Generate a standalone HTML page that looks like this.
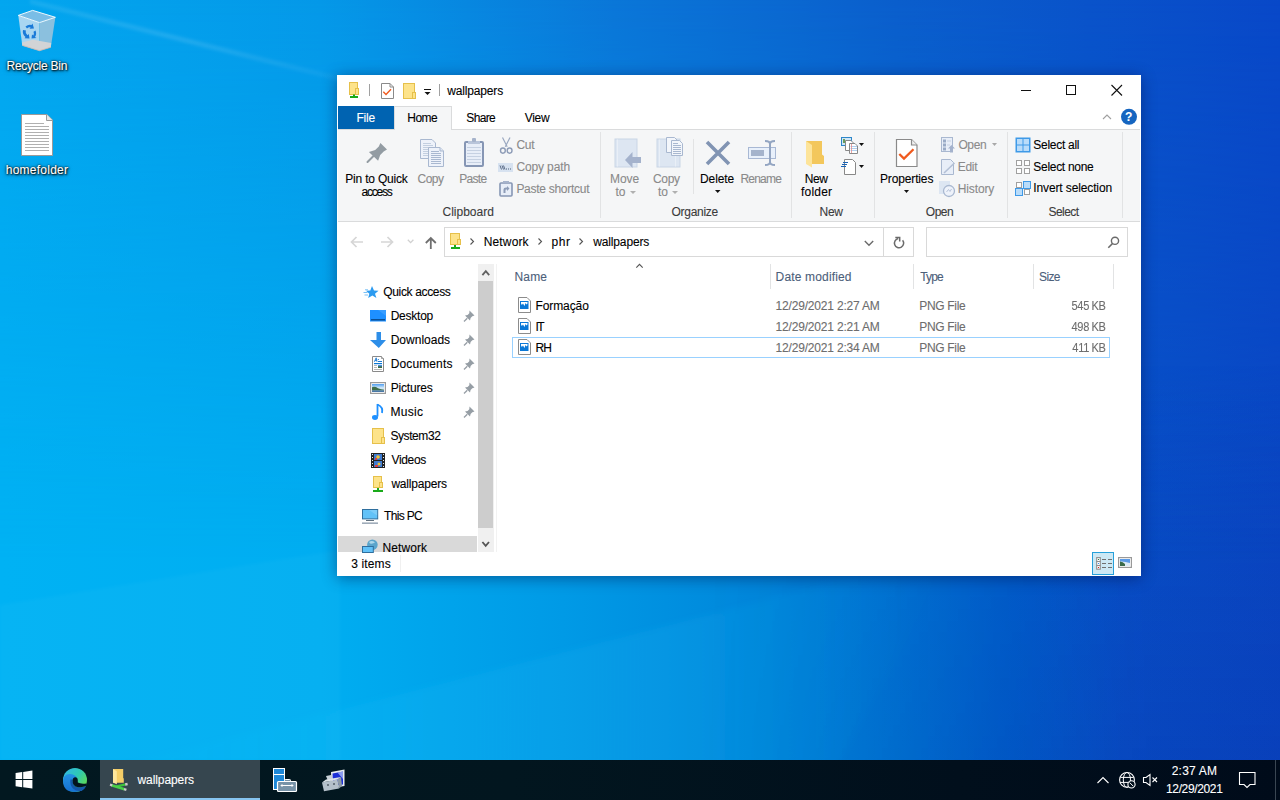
<!DOCTYPE html>
<html><head><meta charset="utf-8">
<style>
*{margin:0;padding:0;box-sizing:border-box}
html,body{width:1280px;height:800px;overflow:hidden}
body{position:relative;font-family:"Liberation Sans",sans-serif;font-size:12px;color:#000;background:#0a80dc}
.a{position:absolute}
.t{position:absolute;white-space:nowrap;line-height:14px;font-size:12px;-webkit-text-stroke:0.1px currentColor}
svg{position:absolute;overflow:visible}
.dlabel{color:#fff;text-shadow:0 0 2px rgba(0,0,0,1),1px 1px 2px rgba(0,0,0,0.9),0 1px 4px rgba(0,0,0,0.6)}
.dis{color:#8a8a8a}
.sep{position:absolute;width:1px;background:#e2e3e4}
.hdr{color:#4c607a}
.gl{color:#3b3b3b}
.gray{color:#6d6d6d}
</style></head><body>
<!-- wallpaper -->
<div class="a" style="left:0;top:0;width:1280px;height:800px;background:linear-gradient(90deg,#00b2f4 0%,#00aef1 25%,#009ae6 44%,#0086da 60%,#0072d2 70%,#0060cc 78%,#0850c8 88%,#0a48c4 100%)"></div>
<div class="a" style="left:0;top:0;width:1280px;height:800px;background:linear-gradient(90deg,#02a6ef 0%,#0498e8 25%,#0a76d8 48%,#0a5ecc 70%,#0848c8 100%);-webkit-mask-image:linear-gradient(180deg,rgba(0,0,0,1) 0%,rgba(0,0,0,0.6) 30%,rgba(0,0,0,0) 70%)"></div>
<div class="a" style="left:0;top:0;width:1280px;height:800px;background:linear-gradient(180deg,rgba(5,15,130,0) 45%,rgba(5,15,130,0.15) 100%);-webkit-mask-image:linear-gradient(90deg,rgba(0,0,0,0) 55%,rgba(0,0,0,1) 90%)"></div>
<svg style="left:0;top:0" width="1280" height="800">
 <defs>
  <linearGradient id="ray1" x1="0" y1="0" x2="1" y2="0"><stop offset="0" stop-color="#fff" stop-opacity="0.08"/><stop offset="0.5" stop-color="#fff" stop-opacity="0.11"/><stop offset="1" stop-color="#fff" stop-opacity="0.03"/></linearGradient>
  <linearGradient id="ray2" x1="0" y1="0" x2="1" y2="0"><stop offset="0" stop-color="#30d0ff" stop-opacity="0.0"/><stop offset="0.45" stop-color="#30d0ff" stop-opacity="0.10"/><stop offset="0.7" stop-color="#30d0ff" stop-opacity="0.10"/><stop offset="1" stop-color="#30d0ff" stop-opacity="0"/></linearGradient>
  <filter id="bl" x="-20%" y="-20%" width="140%" height="140%"><feGaussianBlur stdDeviation="1.6"/></filter>
  <filter id="bl2" x="-20%" y="-20%" width="140%" height="140%"><feGaussianBlur stdDeviation="3"/></filter>
 </defs>
 <path d="M30 -1 L350 79 L350 84 L30 4 Z" fill="url(#ray1)" filter="url(#bl)"/>
 <path d="M0 760 L0 605 L340 550 L340 760 Z" fill="#fff" fill-opacity="0.025" filter="url(#bl)"/>
 <path d="M0 800 L0 797 L880 571 L940 571 L820 800 Z" fill="url(#ray2)" filter="url(#bl2)"/>
</svg>

<!-- desktop icons -->
<svg style="left:0;top:0" width="80" height="200">
 <path d="M18.3 15.4 L39.5 22.6 L39.5 50.7 L22.3 45.4 Z" fill="#a9d6f1"/>
 <path d="M39.5 22.6 L55.4 17.3 L50.8 47.3 L39.5 50.7 Z" fill="#8bc0de"/>
 <path d="M18.3 15.4 L32.6 10.4 L55.4 17.3 L39.5 22.6 Z" fill="#79bde6"/>
 <path d="M18.3 15.4 L32.6 10.4 L55.4 17.3 L39.5 22.6 Z" fill="none" stroke="#eef8fd" stroke-width="1"/>
 <path d="M21.9 42.5 L33 39.8 L51.2 43 L50.8 47.3 L39.5 50.7 L22.3 45.4 Z" fill="#d2d4d6"/>
 <path d="M22.3 45.4 L39.5 50.7 L50.8 47.3" fill="none" stroke="#c9b8b0" stroke-width="0.8"/>
 <g fill="#1a7ad8">
  <path d="M25.5 26.5 Q28.5 24 31.5 25 L32.5 23.5 L34 28.5 L29.5 28.8 L30.6 27.4 Q28.5 27 27 28.5 Z"/>
  <path d="M35.5 30.5 Q37 34 35 37 L36.5 38 L31.5 38.5 L32 34.5 L33.3 35.6 Q34.4 33.8 33.5 31.8 Z"/>
  <path d="M23 30 Q22 34 25.5 37 L24.5 38.3 L29.5 38.5 L28.8 34 L27.6 35.2 Q25 33 26 30.5 Z"/>
 </g>
 <path d="M21.5 114.5 L47 114.5 L52.5 120 L52.5 155.5 L21.5 155.5 Z" fill="#fff" stroke="#9a9a9a" stroke-width="1"/>
 <path d="M46.5 114.5 L46.5 120.5 L52.5 120.5" fill="#e8e8e8" stroke="#9a9a9a" stroke-width="1"/>
 <g stroke="#b0b0b0" stroke-width="1">
  <path d="M25 123.5H44M25 126.5H49M25 129.5H49M25 132.5H49M25 135.5H49M25 138.5H49M25 141.5H49M25 144.5H49M25 147.5H49M25 150.5H49"/>
 </g>
</svg>
<div class="t dlabel" style="left:6.50px;top:59px;letter-spacing:-0.250px">Recycle Bin</div>
<div class="t dlabel" style="left:5.75px;top:163px;letter-spacing:0.250px">homefolder</div>

<!-- window -->
<div class="a" style="left:337px;top:75px;width:804px;height:501px;background:#fff;box-shadow:0 2px 14px rgba(0,10,60,0.45)"></div>

<!-- title bar -->
<svg style="left:0;top:0" width="1" height="1">
 <rect x="349.5" y="82.5" width="8" height="12" fill="#fde38a" stroke="#e6c04a"/>
 <rect x="355.5" y="88.5" width="3" height="6" fill="#fde38a" stroke="#e6c04a"/>
 <rect x="353" y="94.5" width="2" height="2" fill="#1aaa1a"/>
 <rect x="350" y="96" width="8" height="2" fill="#1aaa1a"/>
 <rect x="369" y="84" width="1" height="12" fill="#a0a0a0"/>
 <path d="M381.5 83.5 H390 L393.5 87 V98.5 H381.5 Z" fill="#fff" stroke="#8a8a8a"/>
 <path d="M390 83.5 V87 H393.5" fill="none" stroke="#8a8a8a"/>
 <path d="M383.3 91.8 L386 94.5 L391 89.2" fill="none" stroke="#f05a1e" stroke-width="1.4"/>
 <rect x="403.5" y="83.5" width="11" height="15" fill="#fde38a" stroke="#e6c04a"/>
 <rect x="412.5" y="92.5" width="3" height="6" fill="#fde38a" stroke="#e6c04a"/>
 <rect x="424" y="89" width="7" height="1" fill="#111"/>
 <path d="M424.5 92 H430.5 L427.5 95 Z" fill="#111"/>
 <rect x="439" y="84" width="1" height="12" fill="#a0a0a0"/>
 <rect x="1021" y="90" width="10" height="1" fill="#111"/>
 <rect x="1066.5" y="85.5" width="9" height="9" fill="none" stroke="#111"/>
 <path d="M1111.5 85 L1122 95.5 M1122 85 L1111.5 95.5" stroke="#111" stroke-width="1.1"/>
 <path d="M1103 119 L1107 115 L1111 119" fill="none" stroke="#a0a0a0" stroke-width="1.1"/>
 <circle cx="1129" cy="116.8" r="8" fill="#1565c0"/>
</svg>
<div class="t" style="left:447.30px;top:84px;letter-spacing:-0.167px">wallpapers</div>
<div class="t" style="left:1125px;top:110px;color:#fff;font-weight:bold;font-size:12px">?</div>

<!-- tabs -->
<div class="a" style="left:338px;top:106px;width:56px;height:23px;background:#0063b1"></div>
<div class="t" style="left:356.40px;top:111px;color:#fff;letter-spacing:-0.167px">File</div>
<div class="t" style="left:466.30px;top:111px;letter-spacing:-0.650px">Share</div>
<div class="t" style="left:524.70px;top:111px;letter-spacing:-0.300px">View</div>

<!-- ribbon -->
<div class="a" style="left:338px;top:129px;width:802px;height:93px;background:#f5f6f7;border-top:1px solid #dadbdc;border-bottom:1px solid #dadbdc"></div>
<div class="a" style="left:394px;top:106px;width:58px;height:24px;background:#f5f6f7;border:1px solid #dadbdc;border-bottom:0"></div>
<div class="t" style="left:407.20px;top:111px;letter-spacing:-0.467px">Home</div>
<div class="sep" style="left:600px;top:132px;height:86px"></div>
<div class="sep" style="left:693px;top:139px;height:55px"></div>
<div class="sep" style="left:791px;top:132px;height:86px"></div>
<div class="sep" style="left:874px;top:132px;height:86px"></div>
<div class="sep" style="left:1007px;top:132px;height:86px"></div>
<div class="sep" style="left:1122px;top:132px;height:86px"></div>
<!-- ribbon icons -->
<svg style="left:0;top:0" width="1" height="1">
 <!-- pin -->
 <path d="M380.4 143 L387 149.4 L383.7 151.6 L380.2 155.1 L378.1 160.8 L368.9 151.9 L375.2 150 L378.8 146.4 Z" fill="#939ca3"/>
 <path d="M373.5 156 L367.5 162" stroke="#939ca3" stroke-width="2" stroke-linecap="round"/>
 <!-- copy -->
 <path d="M420.5 139.5 H432 L435.5 143 V158.5 H420.5 Z" fill="#eef2fa" stroke="#a9b8d0"/>
 <g stroke="#c3cfe0"><path d="M423 143.5H431M423 145.5H433M423 147.5H433M423 149.5H433M423 151.5H433M423 153.5H433M423 155.5H433"/></g>
 <path d="M428.5 147.5 H440 L443.5 151 V166.5 H428.5 Z" fill="#eef2fa" stroke="#a9b8d0"/>
 <path d="M440 147.5 V151 H443.5" fill="#dfe6f2" stroke="#a9b8d0"/>
 <g stroke="#a9b8d0"><path d="M431 151.5H439M431 153.5H441M431 155.5H441M431 157.5H441M431 159.5H441M431 161.5H441M431 163.5H441"/></g>
 <!-- paste -->
 <rect x="465" y="142" width="18" height="24" rx="1" fill="#e8eef8" stroke="#8696b4" stroke-width="2"/>
 <rect x="468" y="141" width="12" height="3" fill="#b9c5da"/>
 <rect x="472" y="138" width="4" height="4" rx="1" fill="#a6b3cb"/>
 <g stroke="#c6d1e2"><path d="M467 147.5H481M467 150.5H481M467 153.5H481M467 156.5H481M467 159.5H481M467 162.5H481"/></g>
 <!-- cut -->
 <path d="M502.5 137.5 L507.2 146.8 M510 137.5 L505.3 146.8" stroke="#9aa8c0" stroke-width="1.2"/>
 <ellipse cx="502.9" cy="150.6" rx="2.4" ry="2.6" fill="none" stroke="#8d9cb7" stroke-width="1.4"/>
 <ellipse cx="509.6" cy="150.6" rx="2.4" ry="2.6" fill="none" stroke="#8d9cb7" stroke-width="1.4"/>
 <!-- copy path -->
 <rect x="498" y="163" width="15" height="9" fill="#d7e2f0"/>
 <path d="M500 165.5 L501.5 169.5 M502 165.5 L503.5 169.5 M503.5 165.5 L505 169.5" stroke="#4d5e7a" stroke-width="0.9"/>
 <rect x="506" y="168.5" width="1" height="1" fill="#4d5e7a"/><rect x="508" y="168.5" width="1" height="1" fill="#4d5e7a"/><rect x="510" y="168.5" width="1" height="1" fill="#4d5e7a"/>
 <!-- paste shortcut -->
 <rect x="500" y="183" width="12" height="13" rx="1" fill="#e8eef8" stroke="#8696b4" stroke-width="1.6"/>
 <rect x="503" y="181" width="6" height="2" fill="#a6b3cb"/>
 <path d="M503.5 193 L503.5 189.5 Q503.5 187.5 506 187.5 L507 187.5 L507 186 L509.5 188.5 L507 191 L507 189.5 L506 189.5 Q505.5 189.5 505.5 190.5 L505.5 193 Z" fill="#8d9cb7"/>
 <!-- move to -->
 <rect x="615" y="139" width="22" height="28" fill="#dde6f2" stroke="#c9d5e6"/>
 <path d="M617.5 139.5 V166.5" stroke="#e9eff7"/>
 <path d="M625 160 L632.5 152 L632.5 157 L641 157 L641 163 L632.5 163 L632.5 168 Z" fill="#a4b2cc"/>
 <!-- copy to -->
 <rect x="657" y="139" width="23" height="28" fill="#dde6f2" stroke="#c9d5e6"/>
 <path d="M659.5 139.5 V166.5 M675.5 150 V166.5" stroke="#e9eff7"/>
 <path d="M666.5 137.5 H674.5 L677.5 140.5 V152.5 H666.5 Z" fill="#f3f6fb" stroke="#a9b8d0"/>
 <path d="M671.5 140.5 H679.5 L682.5 143.5 V155.5 H671.5 Z" fill="#f3f6fb" stroke="#a9b8d0"/>
 <g stroke="#a9b8d0"><path d="M673 143.5H678M673 145.5H681M673 147.5H681M673 149.5H681M673 151.5H681M673 153.5H681"/></g>
 <!-- delete -->
 <path d="M707 142 L729 164 M729 142 L707 164" stroke="#8194b3" stroke-width="3.6"/>
 <!-- rename -->
 <rect x="748.5" y="147.5" width="27" height="11" fill="#e8f0fb" stroke="#a8b8d4"/>
 <rect x="751" y="150" width="13" height="6" fill="#a4b3cc"/>
 <path d="M770 142 V164" stroke="#93a5c2" stroke-width="2"/>
 <path d="M765 141 Q770 141 770 144 Q770 141 775 141 M765 165 Q770 165 770 162 Q770 165 775 165" fill="none" stroke="#93a5c2" stroke-width="2"/>
 <!-- new folder -->
 <path d="M806 141 L822 141 L822 154.5 L824 156 L824 164 L812 164 Z" fill="#f3c75c"/>
 <path d="M806 141 L812 145 L812 167.5 L806 164 Z" fill="#fde49a"/>
 <!-- new item -->
 <rect x="841.5" y="137.5" width="10" height="8" fill="#cfe6f7" stroke="#2d86c8"/>
 <rect x="843" y="139" width="2" height="4" fill="#6b9d5a"/>
 <path d="M845.5 140.5 H851 L853.5 143 V150.5 H845.5 Z" fill="#fff" stroke="#888"/>
 <path d="M849.5 143.5 H855 L857.5 146 V153.5 H849.5 Z" fill="#fff" stroke="#888"/>
 <path d="M850.5 146.5H857M850.5 148.5H857M850.5 150.5H857" stroke="#9cc3ea" stroke-width="0.8"/>
 <path d="M851.5 144 V153" stroke="#e58a8a" stroke-width="0.8"/>
 <path d="M859 143 H864 L861.5 146 Z" fill="#111"/>
 <!-- easy access -->
 <path d="M844.5 159.5 H852.5 L855.5 162.5 V174.5 H844.5 Z" fill="#fff" stroke="#888"/>
 <path d="M843 162.5 H848 M842 164.5 H847 M841 166.5 H846" stroke="#1a64b6" stroke-width="1"/>
 <path d="M859 165 H864 L861.5 168 Z" fill="#111"/>
 <!-- properties -->
 <path d="M896.5 139.5 H911.5 L917 145 V166.5 H896.5 Z" fill="#fff" stroke="#8a8a8a" stroke-width="1.2"/>
 <path d="M911.5 139.5 V145 H917" fill="#eee" stroke="#8a8a8a" stroke-width="1.2"/>
 <path d="M899.3 154 L904 158.6 L913.5 149.3" fill="none" stroke="#f05a1e" stroke-width="2.3"/>
 <path d="M904 190 H909 L906.5 193 Z" fill="#111"/>
 <!-- open -->
 <rect x="941.5" y="137.5" width="11" height="14" fill="#e8eef8" stroke="#a9b8d0"/>
 <rect x="943" y="139.5" width="3" height="3" fill="#9aabc6"/><rect x="943" y="143.5" width="3" height="3" fill="#9aabc6"/><rect x="943" y="147.5" width="3" height="3" fill="#9aabc6"/>
 <path d="M947 141H951M947 145H950" stroke="#c6d1e2"/>
 <path d="M951.5 145 L955 148.5 L953 148.5 L953 152.5 L950 152.5 L950 148.5 L948 148.5 Z" fill="#a4b2cc"/>
 <path d="M992 143 H997 L994.5 146 Z" fill="#a8a8a8"/>
 <!-- edit -->
 <path d="M941.5 159.5 H950.5 L953.5 162.5 V174.5 H941.5 Z" fill="#e8eef8" stroke="#a9b8d0"/>
 <path d="M944 173 L954.5 163" stroke="#b3c0d6" stroke-width="1.6"/>
 <!-- history -->
 <rect x="939" y="181" width="11" height="13" fill="#dde6f2"/>
 <circle cx="949" cy="191" r="5.5" fill="#eef2fa" stroke="#a9b8d0" stroke-width="1.3"/>
 <path d="M946.5 192 L948.5 189.5 L950 191.5 L951.5 189" fill="none" stroke="#a9b8d0" stroke-width="0.8"/>
 <!-- select all -->
 <rect x="1015.5" y="137.5" width="15" height="15" fill="#3f9ae8"/>
 <rect x="1017" y="139" width="5.5" height="5.5" fill="#b9dcfa"/><rect x="1023.5" y="139" width="5.5" height="5.5" fill="#b9dcfa"/>
 <rect x="1017" y="145.5" width="5.5" height="5.5" fill="#b9dcfa"/><rect x="1023.5" y="145.5" width="5.5" height="5.5" fill="#b9dcfa"/>
 <!-- select none -->
 <g fill="#fff" stroke="#a0a0a0"><rect x="1016.5" y="160.5" width="5" height="5"/><rect x="1024.5" y="160.5" width="5" height="5"/><rect x="1016.5" y="168.5" width="5" height="5"/><rect x="1024.5" y="168.5" width="5" height="5"/></g>
 <!-- invert -->
 <g fill="#fff" stroke="#a0a0a0"><rect x="1016.5" y="182.5" width="5" height="5"/><rect x="1024.5" y="189.5" width="5" height="5"/></g>
 <g fill="#b9dcfa" stroke="#3f9ae8"><rect x="1023.5" y="181.5" width="7" height="7"/><rect x="1015.5" y="188.5" width="7" height="7"/></g>
 <!-- move/copy to arrows -->
 <path d="M630 191 H636 L633 194 Z" fill="#b0b0b0"/>
 <path d="M672 191 H678 L675 194 Z" fill="#b0b0b0"/>
 <path d="M715 190 H720.5 L717.7 193 Z" fill="#111"/>
</svg>

<div class="t" style="left:345.25px;top:172px;letter-spacing:-0.195px">Pin to Quick</div>
<div class="t" style="left:361.50px;top:185px;letter-spacing:-1.200px">access</div>
<div class="t dis" style="left:417.50px;top:172px;letter-spacing:-0.500px">Copy</div>
<div class="t dis" style="left:459.25px;top:172px;letter-spacing:-0.688px">Paste</div>
<div class="t dis" style="left:516.40px;top:138px;letter-spacing:-0.200px">Cut</div>
<div class="t dis" style="left:516.40px;top:160px;letter-spacing:-0.125px">Copy path</div>
<div class="t dis" style="left:516.40px;top:182px;letter-spacing:-0.277px">Paste shortcut</div>
<div class="t gl" style="left:442.50px;top:205px;letter-spacing:0.000px">Clipboard</div>

<div class="t dis" style="left:610.00px;top:172px;letter-spacing:-0.083px">Move</div>
<div class="t dis" style="left:615.60px;top:185px;letter-spacing:-0.100px">to</div>
<div class="t dis" style="left:653.00px;top:172px;letter-spacing:-0.333px">Copy</div>
<div class="t dis" style="left:658.00px;top:185px;letter-spacing:0.000px">to</div>
<div class="t" style="left:700.00px;top:172px;letter-spacing:-0.080px">Delete</div>
<div class="t dis" style="left:740.40px;top:172px;letter-spacing:-0.760px">Rename</div>
<div class="t gl" style="left:671.50px;top:205px;letter-spacing:-0.286px">Organize</div>

<div class="t" style="left:804.80px;top:172px;letter-spacing:-0.500px">New</div>
<div class="t" style="left:801.00px;top:185px;letter-spacing:0.200px">folder</div>
<div class="t gl" style="left:819.60px;top:205px;letter-spacing:-0.300px">New</div>

<div class="t" style="left:880.00px;top:172px;letter-spacing:-0.144px">Properties</div>
<div class="t dis" style="left:958.40px;top:138px;letter-spacing:-0.367px">Open</div>
<div class="t dis" style="left:957.70px;top:160px;letter-spacing:-0.300px">Edit</div>
<div class="t dis" style="left:957.70px;top:182px;letter-spacing:-0.117px">History</div>
<div class="t gl" style="left:925.80px;top:205px;letter-spacing:-0.500px">Open</div>

<div class="t" style="left:1033.30px;top:138px;letter-spacing:-0.278px">Select all</div>
<div class="t" style="left:1033.30px;top:160px;letter-spacing:-0.290px">Select none</div>
<div class="t" style="left:1033.30px;top:181px;letter-spacing:-0.127px">Invert selection</div>
<div class="t gl" style="left:1048.50px;top:205px;letter-spacing:-0.540px">Select</div>
<!-- address row -->
<div class="a" style="left:444px;top:227px;width:470px;height:30px;border:1px solid #d9d9d9;background:#fff"></div>
<div class="a" style="left:883px;top:228px;width:1px;height:28px;background:#d9d9d9"></div>
<div class="a" style="left:926px;top:227px;width:202px;height:30px;border:1px solid #d9d9d9;background:#fff"></div>
<svg style="left:0;top:0" width="1" height="1">
 <path d="M351.5 242 H363 M356.5 237 L351.5 242 L356.5 247" fill="none" stroke="#d6d6d6" stroke-width="1.7"/>
 <path d="M381 242 H392.5 M387.5 237 L392.5 242 L387.5 247" fill="none" stroke="#d6d6d6" stroke-width="1.7"/>
 <path d="M407.8 239.8 L410.6 242.6 L413.4 239.8" fill="none" stroke="#d0d0d0" stroke-width="1.3"/>
 <path d="M430.8 249 V238 M425.8 243 L430.8 238 L435.8 243" fill="none" stroke="#6f6f6f" stroke-width="1.8"/>
 <rect x="450.5" y="233.5" width="9" height="11" fill="#fde38a" stroke="#e6c04a"/>
 <rect x="457.5" y="239.5" width="3" height="5" fill="#fde38a" stroke="#e6c04a"/>
 <rect x="454" y="245" width="2" height="2" fill="#1aaa1a"/>
 <rect x="451" y="247" width="9" height="2" fill="#1aaa1a"/>
 <path d="M470.5 238.5 L473.5 241.5 L470.5 244.5" fill="none" stroke="#555" stroke-width="1.1"/>
 <path d="M538.5 238.5 L541.5 241.5 L538.5 244.5" fill="none" stroke="#555" stroke-width="1.1"/>
 <path d="M579.5 238.5 L582.5 241.5 L579.5 244.5" fill="none" stroke="#555" stroke-width="1.1"/>
 <path d="M864.8 241 L869 245.2 L873.2 241" fill="none" stroke="#6a6a6a" stroke-width="1.4"/>
 <path d="M902.6 240.2 A4.6 4.6 0 1 1 898.2 238.6" fill="none" stroke="#6a6a6a" stroke-width="1.5"/>
 <path d="M895.3 237.5 H899.7 V241.6" fill="none" stroke="#6a6a6a" stroke-width="1.5"/>
 <circle cx="1115" cy="240.8" r="3.6" fill="none" stroke="#6a6a6a" stroke-width="1.4"/>
 <path d="M1112.4 243.6 L1108.3 247.7" stroke="#6a6a6a" stroke-width="1.5"/>
</svg>
<div class="t" style="left:483.75px;top:235px;letter-spacing:0.142px">Network</div>
<div class="t" style="left:551.50px;top:235px;letter-spacing:0.600px">phr</div>
<div class="t" style="left:593.30px;top:235px;letter-spacing:-0.156px">wallpapers</div>

<!-- nav pane -->
<div class="a" style="left:338px;top:536px;width:139px;height:16px;background:#d9d9d9"></div>
<svg style="left:0;top:0" width="1" height="1">
 <!-- star -->
 <path d="M372 286 L374 290.6 L378.5 290.8 L375 293.8 L376.4 298 L372.4 295.5 L368.2 298 L369.3 293.8 L366 290.8 L370.3 290.6 Z" fill="#2c9bf0"/>
 <path d="M363.5 292.5 H367.5 M364.5 295 H368 M365 289.8 H368" stroke="#6bbaf5" stroke-width="0.9"/>
 <!-- desktop -->
 <rect x="370" y="310" width="16" height="11.5" fill="#1e90ff"/>
 <path d="M378 310 L386 310 L386 316 Z" fill="#47a7ff" opacity="0.6"/>
 <rect x="371" y="319" width="14" height="1.5" fill="#0b4f93"/>
 <!-- downloads -->
 <path d="M376.5 332 H381 V340 H386 L378.8 348 L370 340 H376.5 Z" fill="#2d8ee8"/>
 <!-- documents -->
 <path d="M372.5 356.5 H381.5 L383.5 358.5 V371.5 H372.5 Z" fill="#fff" stroke="#8a8a8a"/>
 <path d="M381.5 356.5 V358.5 H383.5" fill="#e6e6e6" stroke="#8a8a8a" stroke-width="0.8"/>
 <path d="M374.3 361.8 L376.2 357.8 L377 361.8 M375 360.6 H376.8" fill="none" stroke="#1a78d0" stroke-width="0.9"/>
 <rect x="377.8" y="359" width="1" height="1" fill="#1a78d0"/>
 <rect x="378" y="361" width="4" height="1" fill="#1a78d0"/>
 <rect x="374" y="363" width="8" height="1.2" fill="#0a78d7"/>
 <path d="M374 365.5 H377 M374 367.5 H377 M374 369.5 H382" stroke="#b0b0b0" stroke-width="0.9"/>
 <rect x="378" y="365" width="4" height="3" fill="#4a8ee0"/>
 <rect x="378" y="366.3" width="4" height="1.7" fill="#3b6a42"/>
 <!-- pictures -->
 <rect x="370.6" y="382.6" width="14.8" height="10.8" fill="#fff" stroke="#9a9a9a" stroke-width="1.2"/>
 <defs><linearGradient id="sky" x1="0" y1="0" x2="0" y2="1"><stop offset="0" stop-color="#4f9df0"/><stop offset="0.5" stop-color="#d8ecf8"/><stop offset="1" stop-color="#9cc0d8"/></linearGradient></defs>
 <rect x="372" y="384" width="12" height="8" fill="url(#sky)"/>
 <path d="M372 387.2 Q375 386.2 378 388.2 Q381 389.6 384 389.8 V390.5 H372 Z" fill="#3f6e4a"/>
 <rect x="372" y="390.5" width="12" height="1.5" fill="#4a78a8"/>
 <!-- music -->
 <path d="M377.5 404 V416.5" stroke="#1e90ff" stroke-width="1.8"/>
 <path d="M377.5 404.5 Q383.5 407 382 413" fill="none" stroke="#1e90ff" stroke-width="1.8"/>
 <ellipse cx="375" cy="417.5" rx="3" ry="2.4" fill="#1e90ff"/>
 <!-- system32 folder -->
 <rect x="372.5" y="428.5" width="11" height="15" fill="#fde38a" stroke="#e6c04a"/>
 <rect x="381.5" y="437.5" width="3" height="6" fill="#fde38a" stroke="#e6c04a"/>
 <!-- videos -->
 <rect x="371" y="453" width="14" height="15" fill="#222"/>
 <g fill="#eee"><rect x="372" y="454" width="1" height="1"/><rect x="372" y="457" width="1" height="1"/><rect x="372" y="460" width="1" height="1"/><rect x="372" y="463" width="1" height="1"/><rect x="372" y="466" width="1" height="1"/><rect x="383" y="454" width="1" height="1"/><rect x="383" y="457" width="1" height="1"/><rect x="383" y="460" width="1" height="1"/><rect x="383" y="463" width="1" height="1"/><rect x="383" y="466" width="1" height="1"/></g>
 <rect x="374" y="454" width="8" height="6" fill="#3e7bd0"/>
 <rect x="374" y="461" width="8" height="6" fill="#3e7bd0"/>
 <circle cx="378" cy="457" r="1.8" fill="#f2c230"/><rect x="375" y="458" width="2" height="2" fill="#e04040"/>
 <circle cx="379" cy="464" r="1.5" fill="#f2c230"/><rect x="375" y="465" width="3" height="2" fill="#e04040"/>
 <!-- wallpapers net folder -->
 <rect x="373.5" y="476.5" width="8" height="11" fill="#fde38a" stroke="#e6c04a"/>
 <rect x="379.5" y="482.5" width="3" height="5" fill="#fde38a" stroke="#e6c04a"/>
 <rect x="377" y="488" width="2" height="2" fill="#1aaa1a"/>
 <rect x="373" y="490" width="10" height="2" fill="#1aaa1a"/>
 <!-- this pc -->
 <rect x="362.5" y="509.5" width="15.2" height="9.4" fill="#62c2f8" stroke="#2f6f9e" stroke-width="1"/>
 <path d="M369 510 L377.2 510 L377.2 515.5 Z" fill="#9fdcfb" opacity="0.45"/>
 <rect x="366" y="520" width="8" height="1" fill="#60707e"/>
 <rect x="362" y="522.5" width="16" height="1.3" fill="#8a9aaa"/>
 <!-- network -->
 <circle cx="372.4" cy="544.8" r="5.3" fill="#5aa5cc"/>
 <path d="M369 542 Q372 540 375 542.5 Q373 544 370 543.5 Z" fill="#bfe3f2" opacity="0.8"/>
 <rect x="362.5" y="546.5" width="10.8" height="6" fill="#62c2f8" stroke="#2f6f9e" stroke-width="1"/>
 <!-- pins -->
 <g fill="#969ea5">
  <path id="pn" d="M469.5 310.5 L474.5 315.5 L472.3 316.3 L470.6 318 L470 320.5 L465 315.5 L467.6 314.9 L469.3 313.2 Z"/>
 </g>
 <g stroke="#969ea5" stroke-width="1.3"><path d="M467.3 318.2 L464 321.5"/></g>
</svg>
<svg style="left:0;top:24px" width="1" height="1"><path d="M469.5 310.5 L474.5 315.5 L472.3 316.3 L470.6 318 L470 320.5 L465 315.5 L467.6 314.9 L469.3 313.2 Z" fill="#969ea5"/><path d="M467.3 318.2 L464 321.5" stroke="#969ea5" stroke-width="1.3"/></svg>
<svg style="left:0;top:48px" width="1" height="1"><path d="M469.5 310.5 L474.5 315.5 L472.3 316.3 L470.6 318 L470 320.5 L465 315.5 L467.6 314.9 L469.3 313.2 Z" fill="#969ea5"/><path d="M467.3 318.2 L464 321.5" stroke="#969ea5" stroke-width="1.3"/></svg>
<svg style="left:0;top:72px" width="1" height="1"><path d="M469.5 310.5 L474.5 315.5 L472.3 316.3 L470.6 318 L470 320.5 L465 315.5 L467.6 314.9 L469.3 313.2 Z" fill="#969ea5"/><path d="M467.3 318.2 L464 321.5" stroke="#969ea5" stroke-width="1.3"/></svg>
<svg style="left:0;top:96px" width="1" height="1"><path d="M469.5 310.5 L474.5 315.5 L472.3 316.3 L470.6 318 L470 320.5 L465 315.5 L467.6 314.9 L469.3 313.2 Z" fill="#969ea5"/><path d="M467.3 318.2 L464 321.5" stroke="#969ea5" stroke-width="1.3"/></svg>

<div class="t" style="left:383.30px;top:285px;letter-spacing:-0.345px">Quick access</div>
<div class="t" style="left:390.70px;top:309px;letter-spacing:-0.242px">Desktop</div>
<div class="t" style="left:390.70px;top:333px;letter-spacing:0.006px">Downloads</div>
<div class="t" style="left:390.70px;top:357px;letter-spacing:0.125px">Documents</div>
<div class="t" style="left:390.70px;top:381px;letter-spacing:-0.171px">Pictures</div>
<div class="t" style="left:390.40px;top:405px;letter-spacing:0.300px">Music</div>
<div class="t" style="left:390.40px;top:429px;letter-spacing:-0.414px">System32</div>
<div class="t" style="left:391.40px;top:453px;letter-spacing:-0.300px">Videos</div>
<div class="t" style="left:391.40px;top:477px;letter-spacing:-0.189px">wallpapers</div>
<div class="t" style="left:384.00px;top:509px;letter-spacing:-0.667px">This PC</div>
<div class="a" style="left:338px;top:536px;width:139px;height:16px;overflow:hidden"><div class="t" style="left:44.50px;top:5px;letter-spacing:0.083px">Network</div></div>
<!-- scrollbar -->
<div class="a" style="left:478px;top:264px;width:16px;height:288px;background:#f0f0f0"></div>
<div class="a" style="left:478px;top:281px;width:15px;height:247px;background:#cdcdcd"></div>
<div class="a" style="left:496px;top:264px;width:1px;height:288px;background:#f2f2f2"></div>
<svg style="left:0;top:0" width="1" height="1">
 <path d="M482.4 275.2 L485.8 271.2 L489.2 275.2" fill="none" stroke="#606060" stroke-width="1.8"/>
 <path d="M482.4 542 L485.7 545.8 L489 542" fill="none" stroke="#555" stroke-width="1.8"/>
</svg>

<!-- file list -->
<svg style="left:0;top:0" width="1" height="1">
 <path d="M636.3 267.7 L639.5 264.4 L642.7 267.7" fill="none" stroke="#555" stroke-width="1.1"/>
</svg>
<div class="t hdr" style="left:514.60px;top:270px;letter-spacing:0.100px">Name</div>
<div class="t hdr" style="left:775.60px;top:270px;letter-spacing:0.158px">Date modified</div>
<div class="t hdr" style="left:920.30px;top:270px;letter-spacing:-0.850px">Type</div>
<div class="t hdr" style="left:1039.10px;top:270px;letter-spacing:-0.667px">Size</div>
<div class="sep" style="left:770px;top:264px;height:25px"></div>
<div class="sep" style="left:913px;top:264px;height:25px"></div>
<div class="sep" style="left:1033px;top:264px;height:25px"></div>
<div class="sep" style="left:1113px;top:264px;height:25px"></div>

<div class="a" style="left:512px;top:337px;width:598px;height:21px;border:1px solid #99d1ff"></div>
<svg style="left:0;top:0" width="1" height="1">
 <g id="fi">
 <path d="M518.5 297.5 H527 L530.5 301 V312.5 H518.5 Z" fill="#fff" stroke="#8c8c8c"/>
 <rect x="520" y="301" width="8.5" height="8" fill="#0a78d7"/>
 <path d="M521 302 H527.5 V303.5 L526.5 304.5 L525.5 303 L524.5 306 L523 303.5 L521.8 305 L521 303.5 Z" fill="#fff"/>
 </g>
</svg>
<svg style="left:0;top:21px" width="1" height="1"><path d="M518.5 297.5 H527 L530.5 301 V312.5 H518.5 Z" fill="#fff" stroke="#8c8c8c"/><rect x="520" y="301" width="8.5" height="8" fill="#0a78d7"/><path d="M521 302 H527.5 V303.5 L526.5 304.5 L525.5 303 L524.5 306 L523 303.5 L521.8 305 L521 303.5 Z" fill="#fff"/></svg>
<svg style="left:0;top:42px" width="1" height="1"><path d="M518.5 297.5 H527 L530.5 301 V312.5 H518.5 Z" fill="#fff" stroke="#8c8c8c"/><rect x="520" y="301" width="8.5" height="8" fill="#0a78d7"/><path d="M521 302 H527.5 V303.5 L526.5 304.5 L525.5 303 L524.5 306 L523 303.5 L521.8 305 L521 303.5 Z" fill="#fff"/></svg>
<div class="t" style="left:535.40px;top:299px;letter-spacing:-0.086px">Formação</div>
<div class="t" style="left:535.40px;top:320px;letter-spacing:-1.500px">IT</div>
<div class="t" style="left:535.40px;top:341px;letter-spacing:-0.800px">RH</div>
<div class="t gray" style="left:775.60px;top:299px;letter-spacing:-0.188px">12/29/2021 2:27 AM</div>
<div class="t gray" style="left:775.60px;top:320px;letter-spacing:-0.188px">12/29/2021 2:21 AM</div>
<div class="t gray" style="left:775.60px;top:341px;letter-spacing:-0.188px">12/29/2021 2:34 AM</div>
<div class="t gray" style="left:919.30px;top:299px;letter-spacing:-0.329px">PNG File</div>
<div class="t gray" style="left:919.30px;top:320px;letter-spacing:-0.329px">PNG File</div>
<div class="t gray" style="left:919.30px;top:341px;letter-spacing:-0.329px">PNG File</div>
<div class="t gray" style="left:1040px;top:299px;width:65.6px;text-align:right;letter-spacing:-0.3px;word-spacing:-0.5px;transform:scaleX(0.92);transform-origin:100% 50%">545 KB</div>
<div class="t gray" style="left:1040px;top:320px;width:65.6px;text-align:right;letter-spacing:-0.3px;word-spacing:-0.5px;transform:scaleX(0.92);transform-origin:100% 50%">498 KB</div>
<div class="t gray" style="left:1040px;top:341px;width:65.6px;text-align:right;letter-spacing:-0.3px;word-spacing:-0.5px;transform:scaleX(0.92);transform-origin:100% 50%">411 KB</div>

<!-- status bar -->
<div class="t" style="left:351.20px;top:557px;letter-spacing:0.133px">3 items</div>
<div class="a" style="left:400px;top:555px;width:1px;height:17px;background:#f0f0f0"></div>
<div class="a" style="left:1092px;top:552px;width:22px;height:23px;background:#cce8f4;border:1px solid #26a0da"></div>
<svg style="left:0;top:0" width="1" height="1">
 <rect x="1096.7" y="557.6" width="3.6" height="11.6" fill="#fff" stroke="#8f8f8f" stroke-width="1.1"/>
 <path d="M1096.5 561.5H1100.5M1096.5 565.5H1100.5" stroke="#8f8f8f" stroke-width="1"/>
 <rect x="1098" y="559" width="1" height="1" fill="#2a7a4a"/><rect x="1098" y="563" width="1" height="1" fill="#3a8af0"/><rect x="1098" y="567" width="1" height="1" fill="#e02020"/>
 <path d="M1102 559.5H1106M1108 559.5H1112M1102 563.5H1106M1108 563.5H1112M1102 567.5H1106M1108 567.5H1112" stroke="#707070" stroke-width="1.1"/>
 <rect x="1118.6" y="557.6" width="12.8" height="9.8" fill="#fff" stroke="#999" stroke-width="1.2"/>
 <rect x="1120" y="559" width="10" height="7" fill="#5b9be8"/>
 <path d="M1120 561.5 Q1124 561 1130 563 V566 H1120 Z" fill="#dbe9f5"/>
 <path d="M1120 561.5 Q1123 561.5 1125 564 L1125 566 H1120 Z" fill="#3a6a4a"/>
</svg>
<!-- taskbar -->
<div class="a" style="left:0;top:760px;width:1280px;height:40px;background:linear-gradient(90deg,#021820 0%,#02161f 40%,#010f1c 75%,#000b1a 100%)"></div>
<div class="a" style="left:100px;top:760px;width:160px;height:40px;background:#36464f"></div>
<div class="a" style="left:100px;top:798px;width:160px;height:2px;background:#86c4f0"></div>
<svg style="left:0;top:0" width="1" height="1">
 <!-- windows logo -->
 <path d="M15.6 773 L22.2 772 V779 H15.6 Z M23.2 771.9 L32.4 770.6 V779 H23.2 Z M15.6 780 H22.2 V787.2 L15.6 786.3 Z M23.2 780 H32.4 V788.4 L23.2 787.3 Z" fill="#fff"/>
 <!-- edge -->
 <defs>
  <linearGradient id="eg1" x1="0" y1="0" x2="1" y2="0.7"><stop offset="0" stop-color="#33b5ec"/><stop offset="0.55" stop-color="#2ec9b4"/><stop offset="1" stop-color="#64dc4c"/></linearGradient>
  <linearGradient id="eg2" x1="0" y1="0" x2="0" y2="1"><stop offset="0" stop-color="#2392e4"/><stop offset="1" stop-color="#1670d0"/></linearGradient>
 </defs>
 <g transform="translate(63,768)">
  <circle cx="12" cy="12" r="12" fill="url(#eg1)"/>
  <path d="M0.05 12.5 Q0.3 6.5 6.5 6 Q11.5 5.8 13.8 9.6 L9.6 11.5 Q8.3 15.5 10.5 18.8 Q13.5 22 18.2 21.6 Q21 21 23.2 17.8 Q20.5 24 12 24 Q0 24 0.05 12.5 Z" fill="url(#eg2)"/>
  <path d="M7.4 11.5 Q6.6 17 10 20.5 Q13.5 23.8 18.5 22.8 Q21.5 21.5 23.4 17.6 Q20 19.6 15.5 19.2 Q11.8 18.8 10.4 16.4 Q9.6 15 9.6 11.6 Z" fill="#1458aa"/>
  <path d="M9.6 12.6 Q9.6 9.3 12.3 9.2 Q14.7 9.3 14.8 12.4 L14.8 14.6 Q17.5 16.2 23.4 15.5 L23.2 17.8 Q20 19.6 15.5 19.2 Q11.8 18.8 10.4 16.4 Q9.6 15 9.6 12.6 Z" fill="#03141f"/>
 </g>
 <!-- folder taskbar -->
 <path d="M113 769 H123.2 V778 L123.8 778.6 V782.8 H113 Z" fill="#f4cd67"/>
 <path d="M113 769 L116.8 771.2 V784.2 L113 782.6 Z" fill="#fde69c"/>
 <path d="M116 786.6 L125.6 784.4" stroke="#3cc43c" stroke-width="2.5"/>
 <path d="M111.5 785.2 L124.5 789.3" stroke="#48d048" stroke-width="2.6"/>
 <path d="M110 784.7 L112.3 785.4 M124 789.1 L126.4 789.8 M125.2 784.5 L127.6 784" stroke="#c9c9c9" stroke-width="2.3"/>
 <!-- server manager -->
 <rect x="273.5" y="768.5" width="11" height="21" fill="#1e88d8" stroke="#fff" stroke-width="1"/>
 <path d="M274 774.5 H284" stroke="#fff"/>
 <rect x="284.5" y="779.5" width="6" height="2.5" rx="0.8" fill="#7893a8" stroke="#fff" stroke-width="1"/>
 <rect x="277.5" y="781.5" width="19" height="10" rx="1" fill="#7893a8" stroke="#fff" stroke-width="1.2"/>
 <path d="M281 785.5 H293" stroke="#fff" stroke-width="1"/><path d="M282.5 784 L281 785.5 L282.5 787 M291.5 784 L293 785.5 L291.5 787" fill="none" stroke="#fff" stroke-width="0.8"/>
 <!-- computer mgmt -->
 <path d="M331 772 L344.5 769.5 L344.5 786 L331.5 788 Z" fill="#e8ecf0"/>
 <path d="M332.5 773.5 L343 771.5 L343 784.5 L333 786 Z" fill="#1c2fd6"/>
 <path d="M337.5 772.5 L343 771.5 L343 779 Z" fill="#a8b8f8" opacity="0.8"/>
 <path d="M326 776 L331 775 L333 780 L328 781 Z" fill="#c9d1d8"/>
 <path d="M322 782.5 L337.5 779.5 L339 788.5 L324 791.3 Z" fill="#b4c0ca"/>
 <path d="M322 782.5 L326 779.5 L341 777 L337.5 779.5 Z" fill="#dde3e8"/>
 <path d="M337.5 779.5 L341 777 L342 786 L339 788.5 Z" fill="#8e9ba6"/>
 <rect x="327" y="784" width="2" height="2" fill="#6b7680"/><rect x="333" y="783" width="2" height="2" fill="#6b7680"/>
</svg>
<div class="t" style="left:137.50px;top:773px;color:#fff;letter-spacing:-0.083px">wallpapers</div>
<svg style="left:0;top:0" width="1" height="1">
 <path d="M1097.5 783 L1103 777.5 L1108.5 783" fill="none" stroke="#fff" stroke-width="1.1"/>
 <circle cx="1127" cy="779.9" r="7.4" fill="none" stroke="#fff" stroke-width="1.1"/>
 <ellipse cx="1126.9" cy="779.9" rx="3.6" ry="7.4" fill="none" stroke="#fff" stroke-width="1"/>
 <path d="M1120.5 777.4 H1133.5 M1120 782.4 H1128" stroke="#fff" stroke-width="1"/>
 <circle cx="1131.5" cy="784.4" r="3.6" fill="#010f1c" stroke="#fff" stroke-width="1.1"/>
 <path d="M1129.6 782.5 L1133.4 786.3" stroke="#fff" stroke-width="1"/>
 <path d="M1143.5 777.5 H1146 L1150 774.5 V785.5 L1146 782.5 H1143.5 Z" fill="none" stroke="#fff" stroke-width="1.1"/>
 <path d="M1152.5 777.5 L1157 782 M1157 777.5 L1152.5 782" stroke="#fff" stroke-width="1.1"/>
 <path d="M1239.5 772.5 H1255 V784.5 H1250 L1247 787.5 L1244 784.5 H1239.5 Z" fill="none" stroke="#fff" stroke-width="1.1"/>
 <rect x="1275" y="760" width="1" height="40" fill="#3a4652"/>
</svg>
<div class="t" style="left:1171.75px;top:764px;color:#fff;letter-spacing:0.192px">2:37 AM</div>
<div class="t" style="left:1166.00px;top:782px;color:#fff;letter-spacing:-0.356px">12/29/2021</div>
</body></html>
